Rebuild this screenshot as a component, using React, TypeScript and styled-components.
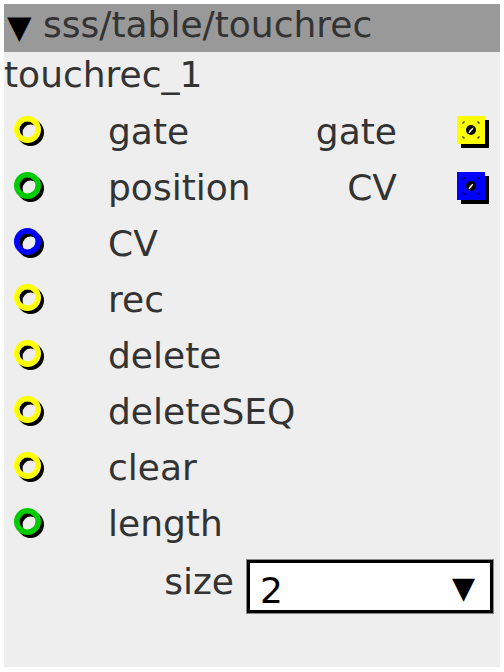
import React from 'react';
import styled, { createGlobalStyle } from 'styled-components';

const GlobalStyle = createGlobalStyle`
  html, body {
    margin: 0;
    padding: 0;
    background: #fff;
  }
  body {
    font-family: "DejaVu Sans", "Liberation Sans", sans-serif;
  }
`;

const Panel = styled.div`
  margin: 4px;
  width: 496px;
  min-height: 663px;
  box-sizing: border-box;
  background: #eee;
  color: #333;
  font-size: 36px;
`;

const Header = styled.div`
  height: 48px;
  line-height: 42px;
  background: #999;
  color: #333;
  white-space: nowrap;
  overflow: hidden;
`;

const Arrow = styled.span`
  display: inline-block;
  box-sizing: border-box;
  width: 39px;
  padding-left: 3px;
  color: #000;
  font-size: 32px;
  vertical-align: -1px;
`;

const InstanceName = styled.div`
  height: 52px;
  box-sizing: border-box;
  padding-top: 2px;
  line-height: 42px;
`;

const Row = styled.div`
  display: grid;
  grid-template-columns: 104px 1fr auto 104px;
  align-items: center;
  height: 56px;
  line-height: 42px;
`;

const JackCell = styled.div`
  display: flex;
  align-items: center;
  padding-left: 10px;
`;

const OutCell = styled.div`
  display: flex;
  align-items: center;
  padding-left: 61px;
`;

const Label = styled.span`
  white-space: nowrap;
`;

const OutLabel = styled.span`
  text-align: right;
  white-space: nowrap;
  margin-right: -1px;
`;

const ParamRow = styled.div`
  display: flex;
  justify-content: flex-end;
  align-items: flex-start;
  gap: 13px;
  padding: 8px 7px 0 0;
`;

const ParamLabel = styled.span`
  line-height: 42px;
  margin-top: 1px;
`;

const Select = styled.div`
  width: 246px;
  height: 53px;
  box-sizing: border-box;
  border: 3px solid #000;
  box-shadow: 0 0 0 1px #888;
  background: #fff;
  color: #000;
  display: flex;
  justify-content: space-between;
  align-items: flex-start;
  padding: 8px 15px 0 10px;
  line-height: 40px;
  overflow: hidden;
`;

const SelectArrow = styled.span`
  font-size: 30px;
  line-height: 40px;
  margin-top: -3px;
`;

type JackColor = 'yellow' | 'green' | 'blue';

const colors: Record<JackColor, string> = {
  yellow: '#ffff00',
  green: '#00cc00',
  blue: '#0000ff',
};

const InJack = ({ color }: { color: JackColor }) => (
  <svg width="32" height="32" viewBox="0 0 32 32">
    <circle cx="16.5" cy="16.5" r="10.7" fill="none" stroke="#000" strokeWidth="5.6" />
    <circle cx="13.5" cy="13.5" r="10.7" fill="none" stroke={colors[color]} strokeWidth="5.6" />
  </svg>
);

const OutJack = ({ color }: { color: JackColor }) => (
  <svg width="32" height="32" viewBox="0 0 32 32">
    <rect x="4" y="4" width="28" height="28" fill="#000" />
    <rect x="0" y="0" width="28" height="28" fill={colors[color]} />
    <path
      d="M6 8V6H8M20 6H22V8M22 20V22H20M8 22H6V20"
      fill="none"
      stroke="#000"
      strokeWidth="1"
      opacity="0.8"
    />
    <circle cx="14" cy="14" r="5" fill="#000" />
    <path d="M11.5 16.5 Q14 12 16.5 11.8 Q15.5 14.5 12.5 17.2 Z" fill="#fff" />
  </svg>
);

const inputs: { name: string; color: JackColor }[] = [
  { name: 'gate', color: 'yellow' },
  { name: 'position', color: 'green' },
  { name: 'CV', color: 'blue' },
  { name: 'rec', color: 'yellow' },
  { name: 'delete', color: 'yellow' },
  { name: 'deleteSEQ', color: 'yellow' },
  { name: 'clear', color: 'yellow' },
  { name: 'length', color: 'green' },
];

const outputs: { name: string; color: JackColor }[] = [
  { name: 'gate', color: 'yellow' },
  { name: 'CV', color: 'blue' },
];

const App: React.FC = () => {
  return (
    <>
      <GlobalStyle />
      <Panel>
        <Header>
          <Arrow>▼</Arrow>sss/table/touchrec
        </Header>
        <InstanceName>touchrec_1</InstanceName>
        {inputs.map((input, i) => {
          const out = outputs[i];
          return (
            <Row key={input.name}>
              <JackCell>
                <InJack color={input.color} />
              </JackCell>
              <Label>{input.name}</Label>
              <OutLabel>{out ? out.name : ''}</OutLabel>
              <OutCell>{out && <OutJack color={out.color} />}</OutCell>
            </Row>
          );
        })}
        <ParamRow>
          <ParamLabel>size</ParamLabel>
          <Select>
            <span>2</span>
            <SelectArrow>▼</SelectArrow>
          </Select>
        </ParamRow>
      </Panel>
    </>
  );
};

export default App;
